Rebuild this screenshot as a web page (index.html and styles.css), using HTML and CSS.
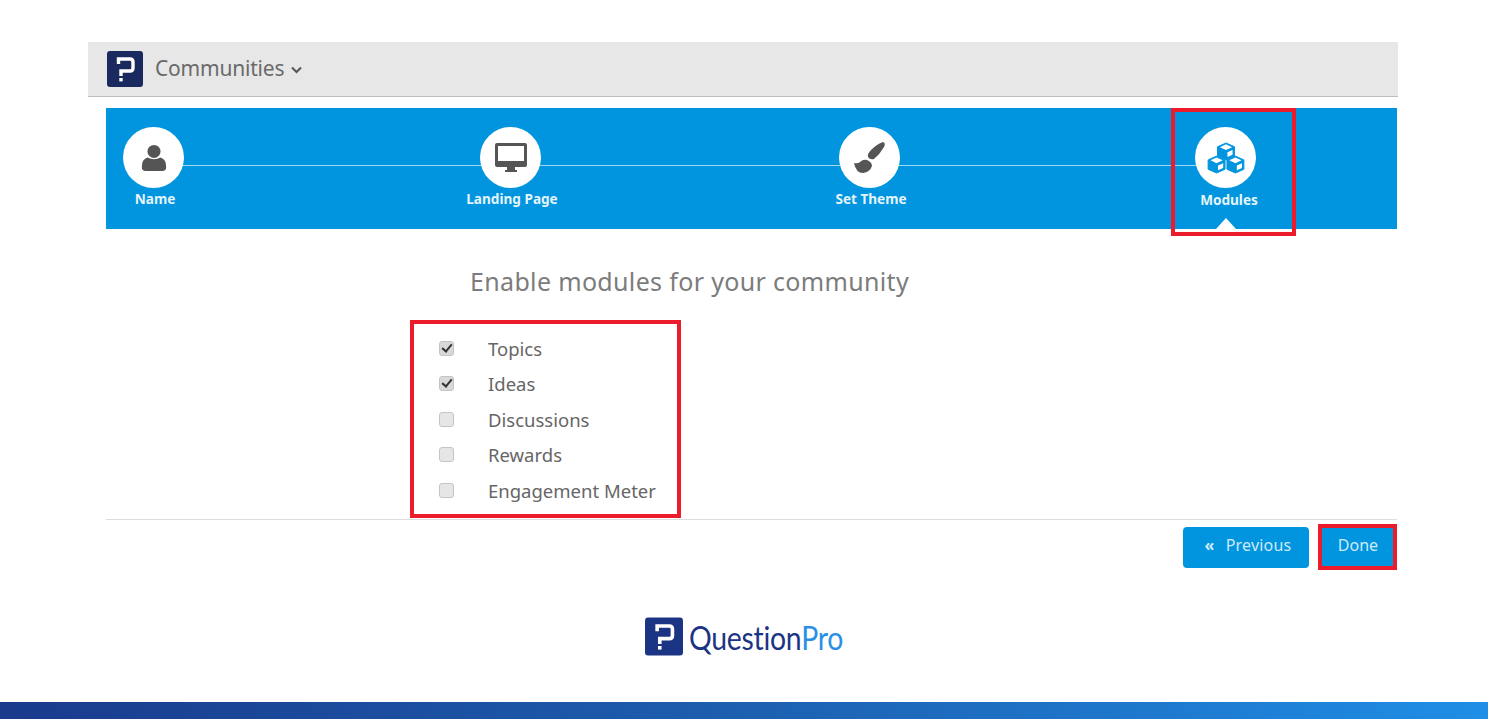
FILE: index.html
```html
<!DOCTYPE html>
<html lang="en">
<head>
    <meta charset="UTF-8">
    <title>Communities - Modules</title>
    <link rel="stylesheet" href="styles.css">
</head>
<body>
    <div class="page">
        <div class="topbar">
            <svg class="brand-mark" viewBox="0 0 36 36">
                <rect width="36" height="36" rx="3" fill="#1b2a5e"/>
                <path d="M11.500 13V8H23Q26 8 26 11V17Q26 20 23 20H14V25" fill="none" stroke="#fff" stroke-width="3.400"/>
                <rect x="12.300" y="27" width="3.400" height="3.400" fill="#fff"/>
            </svg>
            <span class="topbar-title">Communities</span>
            <svg class="caret" viewBox="0 0 12 8"><path d="M1.500 1.500L6 6L10.500 1.500" fill="none" stroke="#555" stroke-width="2"/></svg>
        </div>

        <div class="stepper">
            <div class="step">
                <div class="step-circle">
                    <svg viewBox="0 0 30 30" width="28" height="28">
                        <circle cx="15" cy="8" r="7" fill="#555"/>
                        <path d="M2 25Q2 16 8 14.500Q15 18 22 14.500Q28 16 28 25Q28 29 24 29H6Q2 29 2 25Z" fill="#555"/>
                    </svg>
                </div>
                <span class="step-label">Name</span>
            </div>
            <div class="step">
                <div class="step-circle">
                    <svg viewBox="0 0 34 32" width="34" height="32">
                        <path d="M3 1H31Q33 1 33 3V23Q33 25 31 25H3Q1 25 1 23V3Q1 1 3 1ZM4 4V19H30V4Z" fill="#555" fill-rule="evenodd"/>
                        <path d="M13 25H21V28H23V30H11V28H13Z" fill="#555"/>
                    </svg>
                </div>
                <span class="step-label">Landing Page</span>
            </div>
            <div class="step">
                <div class="step-circle">
                    <svg viewBox="0 0 33 33" width="33" height="33">
                        <path d="M30 1Q33 2 31 6Q27 13 21 18Q17 19 15 16Q14 13 18 9Q24 3 30 1Z" fill="#555"/>
                        <path d="M1 22Q5 23 7 21Q10 18 14 19Q19 21 19 25Q17 31 10 32Q3 32 1 22Z" fill="#555"/>
                    </svg>
                </div>
                <span class="step-label">Set Theme</span>
            </div>
            <div class="step step-active">
                <div class="step-circle">
                    <svg viewBox="0 0 40 34" width="38" height="32">
                        <g fill="#0095de" stroke="#0095de" stroke-width="1" stroke-linejoin="round">
                            <path d="M20 1L29 5V15L20 19L11 15V5Z"/>
                            <path d="M10 15L19 19V29L10 33L1 29V19Z"/>
                            <path d="M30 15L39 19V29L30 33L21 29V19Z"/>
                        </g>
                        <g fill="#fff">
                            <path d="M20 2.500L26.500 5.500L20 8.500L13.500 5.500Z"/>
                            <path d="M10 16.500L16.500 19.500L10 22.500L3.500 19.500Z"/>
                            <path d="M30 16.500L36.500 19.500L30 22.500L23.500 19.500Z"/>
                            <path d="M21.500 11L27 8.500V13.500L21.500 16Z"/>
                            <path d="M11.500 25L17 22.500V27.500L11.500 30Z"/>
                            <path d="M31.500 25L37 22.500V27.500L31.500 30Z"/>
                        </g>
                    </svg>
                </div>
                <span class="step-label">Modules</span>
            </div>
        </div>

        <div class="content">
            <h1 class="content-title">Enable modules for your community</h1>
            <div class="module-list">
                <label class="module-row"><input type="checkbox" checked> <span>Topics</span></label>
                <label class="module-row"><input type="checkbox" checked> <span>Ideas</span></label>
                <label class="module-row"><input type="checkbox"> <span>Discussions</span></label>
                <label class="module-row"><input type="checkbox"> <span>Rewards</span></label>
                <label class="module-row"><input type="checkbox"> <span>Engagement Meter</span></label>
            </div>
        </div>

        <div class="actions">
            <button class="btn btn-prev"><span class="btn-icon">«</span>Previous</button>
            <button class="btn btn-done">Done</button>
        </div>

        <div class="footer-logo">
            <svg class="footer-mark" viewBox="0 0 36 36">
                <rect width="36" height="36" rx="3" fill="#1c3484"/>
                <path d="M11.500 13V8H23Q26 8 26 11V17Q26 20 23 20H14V25" fill="none" stroke="#fff" stroke-width="3.400"/>
                <rect x="12.300" y="27" width="3.400" height="3.400" fill="#fff"/>
            </svg>
            <span class="logo-text">Question<span class="logo-pro">Pro</span></span>
        </div>

        <div class="bottom-bar"></div>

        <!-- annotation boxes from the screenshot -->
        <div class="mark mark-step"></div>
        <div class="mark mark-list"></div>
        <div class="mark mark-done"></div>
    </div>
</body>
</html>
```

FILE: styles.css
```css
html, body {
    margin: 0;
    padding: 0;
    background: #fff;
    overflow: hidden;
}
.page {
    position: relative;
    display: flex;
    flex-direction: column;
    height: 719px;
    padding-top: 42px;
    box-sizing: border-box;
    font-family: "Noto Sans", "Open Sans", sans-serif;
    color: #666;
}

/* top bar */
.topbar {
    display: flex;
    align-items: center;
    width: 1310px;
    height: 55px;
    margin-left: 88px;
    padding-left: 19px;
    box-sizing: border-box;
    background: #e7e7e7;
    border-bottom: 1px solid #bdbdbd;
}
.brand-mark {
    width: 36px;
    height: 36px;
}
.topbar-title {
    margin: -3px 0 0 12px;
    font-size: 21px;
    letter-spacing: -0.2px;
    color: #6a6a6a;
}
.caret {
    width: 13px;
    height: 8px;
    margin-left: 6px;
    margin-top: 1px;
}

/* stepper */
.stepper {
    position: relative;
    display: grid;
    grid-template-columns: 357px 359px 356px 95px;
    width: 1291px;
    height: 121px;
    margin: 11px 0 0 106px;
    padding-top: 19px;
    box-sizing: border-box;
    background: #0095de;
}
.stepper::before {
    content: "";
    position: absolute;
    left: 48px;
    width: 1072px;
    top: 57px;
    height: 1px;
    background: #9fd8f4;
}
.step {
    position: relative;
    display: flex;
    flex-direction: column;
    align-items: center;
    width: 95px;
}
.step-circle {
    display: flex;
    align-items: center;
    justify-content: center;
    width: 61px;
    height: 61px;
    border-radius: 50%;
    background: #fff;
}
.step-label {
    margin: 1px 0 0 3px;
    font-size: 13.600px;
    font-weight: 700;
    line-height: 20px;
    color: #e4f4fc;
    white-space: nowrap;
}
.step-active .step-label {
    margin: 2px 0 0 7px;
}
.step-active::after {
    content: "";
    position: absolute;
    left: 38px;
    top: 91px;
    border-left: 10px solid transparent;
    border-right: 10px solid transparent;
    border-bottom: 11px solid #fff;
}

/* modules */
.content {
    display: flex;
    flex-direction: column;
    margin-left: 439px;
    height: 290px;
}
.content-title {
    margin: 34px 0 0 31px;
    font-size: 25px;
    font-weight: 400;
    line-height: 36px;
    color: #7c7c7c;
    letter-spacing: 0.34px;
}
.module-list {
    display: flex;
    flex-direction: column;
    margin-top: 31.500px;
}
.module-row {
    display: flex;
    align-items: center;
    height: 35.500px;
    font-size: 18.500px;
    color: #666;
}
.module-row input {
    appearance: none;
    position: relative;
    width: 15px;
    height: 15px;
    margin: 0 34px 0 0;
    box-sizing: border-box;
    background: #e6e6e6;
    border: 1px solid #c4c4c4;
    border-radius: 3px;
}
.module-row input:checked {
    background: #d9d9d9;
}
.module-row input:checked::after {
    content: "";
    position: absolute;
    left: 4px;
    top: 0;
    width: 4px;
    height: 8px;
    border-right: 2.500px solid #333;
    border-bottom: 2.500px solid #333;
    transform: rotate(40deg);
}

/* buttons */
.actions {
    display: flex;
    justify-content: flex-end;
    gap: 13px;
    width: 1291px;
    margin-left: 106px;
    padding: 7px 3px 0 0;
    box-sizing: border-box;
    border-top: 1px solid #ddd;
}
.btn {
    height: 41px;
    padding: 0 0 5px;
    border: none;
    border-radius: 4px;
    background: #0095de;
    color: #cfeafa;
    font-family: inherit;
    font-size: 16px;
}
.btn-icon {
    margin-right: 11px;
    font-weight: 700;
}
.btn-prev {
    width: 126px;
    padding-left: 4px;
    letter-spacing: 0.2px;
}
.btn-done {
    width: 72px;
    border-radius: 0;
}

/* logo + bottom band */
.footer-logo {
    display: flex;
    align-items: center;
    margin: 49px 0 0 645px;
    height: 39px;
}
.footer-mark {
    width: 38px;
    height: 39px;
}
.logo-text {
    margin-left: 6px;
    font-family: "Lato", sans-serif;
    font-size: 33px;
    font-weight: 400;
    letter-spacing: -0.3px;
    color: #1c3484;
    transform: scaleX(0.86);
    transform-origin: left center;
}
.logo-pro {
    color: #2b8fe6;
}
.bottom-bar {
    margin-top: auto;
    height: 17px;
    background: linear-gradient(90deg, #1a3a8c 0%, #1d5fb0 50%, #1f8ee6 100%);
}

/* red annotation boxes */
.mark {
    position: absolute;
    box-sizing: border-box;
    border: 4px solid #ec1c2c;
}
.mark-step {
    left: 1171px;
    top: 108px;
    width: 125px;
    height: 128px;
}
.mark-list {
    left: 410px;
    top: 320px;
    width: 271px;
    height: 198px;
}
.mark-done {
    left: 1318px;
    top: 524px;
    width: 79px;
    height: 46px;
}
```
